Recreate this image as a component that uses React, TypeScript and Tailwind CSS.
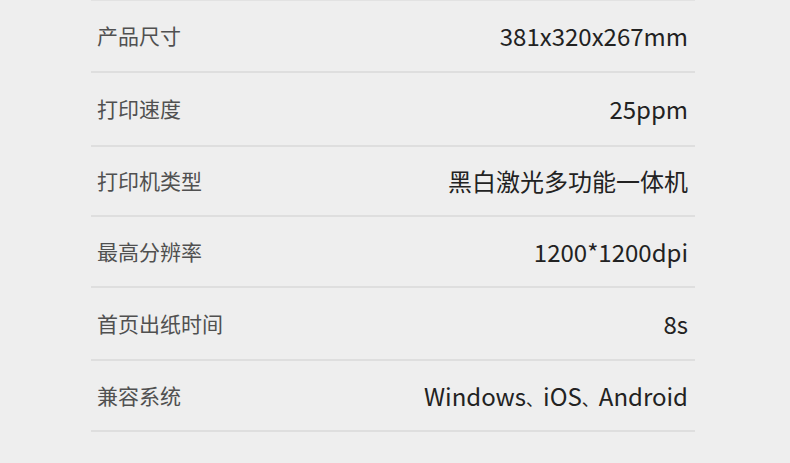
import React from "react";

interface SpecRow {
  label: string;
  value: string;
  height: string;
}

const rows: SpecRow[] = [
  { label: "产品尺寸", value: "381x320x267mm", height: "h-[72px]" },
  { label: "打印速度", value: "25ppm", height: "h-[74px]" },
  { label: "打印机类型", value: "黑白激光多功能一体机", height: "h-[70px]" },
  { label: "最高分辨率", value: "1200*1200dpi", height: "h-[71px]" },
  { label: "首页出纸时间", value: "8s", height: "h-[73px]" },
  { label: "兼容系统", value: "Windows、iOS、Android", height: "h-[71px]" },
];

// the enumeration comma is set narrow in the reference
const renderValue = (value: string) =>
  value.split("、").map((part, i) => (
    <React.Fragment key={i}>
      {i > 0 && <span className="text-[17px]">、</span>}
      {part}
    </React.Fragment>
  ));

export default function App() {
  return (
    <div
      className="w-[790px] h-[463px] bg-[#eeeeee] overflow-hidden"
      style={{ fontFamily: '"Noto Sans CJK SC", "Noto Sans", sans-serif' }}
    >
      <div className="ml-[91px] w-[604px] border-t-2 border-[#e2e2e2] -mt-[1px]">
        {rows.map((row) => (
          <div
            key={row.label}
            className={`${row.height} flex items-center justify-between border-b-2 border-[#dedede] pl-[6px] pr-[7px]`}
          >
            <span className="text-[21px] text-[#505050]">{row.label}</span>
            <span className="text-[24px] text-[#222222] whitespace-nowrap">{renderValue(row.value)}</span>
          </div>
        ))}
      </div>
    </div>
  );
}
